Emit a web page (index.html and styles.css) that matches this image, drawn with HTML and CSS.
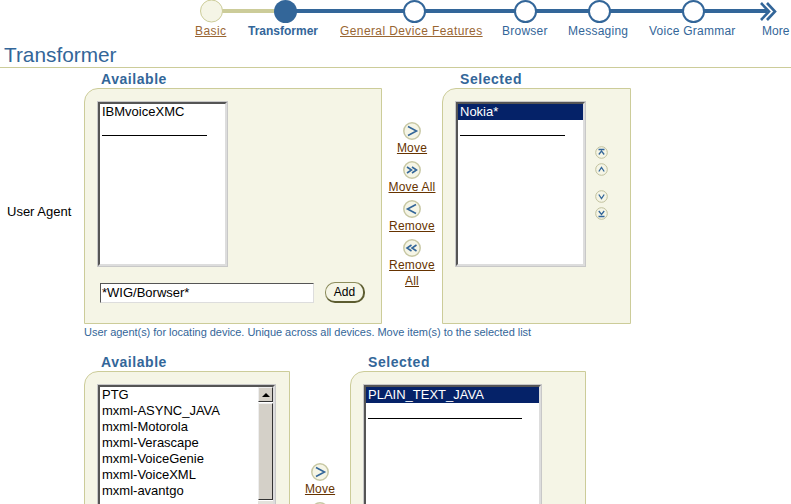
FILE: index.html
```html
<!DOCTYPE html>
<html lang="en">
<head>
<meta charset="utf-8">
<title>Transformer</title>
<link rel="stylesheet" href="styles.css">
</head>
<body>
<svg width="0" height="0" class="defs" aria-hidden="true">
  <symbol id="ring" viewBox="0 0 18 18"><circle cx="9" cy="9" r="8.2" fill="#f5f5e6" stroke="#c8c8a4" stroke-width="1.5"/></symbol>
</svg>
<nav class="train">
  <svg class="track" width="791" height="24" viewBox="0 0 791 24" aria-hidden="true">
    <rect x="222" y="9" width="54" height="4" fill="#cccc99"/>
    <rect x="285" y="9" width="482" height="4" fill="#336699"/>
    <circle cx="211.5" cy="11" r="11" fill="#f5f5e6" stroke="#cccc99" stroke-width="1"/>
    <circle cx="285.5" cy="11.5" r="11.5" fill="#336699"/>
    <circle cx="414.5" cy="11.5" r="10.5" fill="#fff" stroke="#336699" stroke-width="2"/>
    <circle cx="525.5" cy="11.5" r="10.5" fill="#fff" stroke="#336699" stroke-width="2"/>
    <circle cx="599.5" cy="11.5" r="10.5" fill="#fff" stroke="#336699" stroke-width="2"/>
    <circle cx="693.5" cy="11.5" r="10.5" fill="#fff" stroke="#336699" stroke-width="2"/>
    <path d="M761 3l8 8.500-8 8.500M767 3l8 8.500-8 8.500" fill="none" stroke="#336699" stroke-width="2.600"/>
  </svg>
  <div class="steps">
    <a class="step done">Basic</a>
    <span class="step current">Transformer</span>
    <a class="step done">General Device Features</a>
    <span class="step">Browser</span>
    <span class="step">Messaging</span>
    <span class="step">Voice Grammar</span>
    <span class="step more">More</span>
  </div>
</nav>
<h1 class="title">Transformer</h1>

<section class="field first">
  <div class="field-label">User Agent</div>
  <div class="field-body">
    <div class="shuttle">
      <div class="pane">
        <h2 class="pane-title indent-a">Available</h2>
        <div class="box box-a1">
          <div class="list list-a1">
            <div class="item">IBMvoiceXMC</div>
            <div class="sep sep-short"></div>
          </div>
          <div class="add-row">
            <div class="textbox">*WIG/Borwser*</div>
            <button class="add" type="button">Add</button>
          </div>
        </div>
      </div>
      <div class="moves">
        <div class="move"><svg class="ico" viewBox="0 0 18 18"><use href="#ring"/><path d="M5 4.500 13.500 9 5 13.500" fill="none" stroke="#336699" stroke-width="1.600"/></svg><a>Move</a></div>
        <div class="move"><svg class="ico" viewBox="0 0 18 18"><use href="#ring"/><path d="M4 6l4.500 3L4 12M9 6l4.500 3L9 12" fill="none" stroke="#336699" stroke-width="1.600"/></svg><a>Move All</a></div>
        <div class="move"><svg class="ico" viewBox="0 0 18 18"><use href="#ring"/><path d="M13 4.500 4.500 9l8.500 4.500" fill="none" stroke="#336699" stroke-width="1.600"/></svg><a>Remove</a></div>
        <div class="move"><svg class="ico" viewBox="0 0 18 18"><use href="#ring"/><path d="M8.500 6 4 9l4.500 3M13.500 6 9 9l4.500 3" fill="none" stroke="#336699" stroke-width="1.600"/></svg><a>Remove All</a></div>
      </div>
      <div class="pane">
        <h2 class="pane-title indent-s1">Selected</h2>
        <div class="box box-s1">
          <div class="list list-s1">
            <div class="item selected">Nokia*</div>
            <div class="sep sep-short"></div>
          </div>
          <div class="reorder">
            <div class="order-group">
              <svg class="mini" viewBox="0 0 13 13"><circle cx="6.500" cy="6.500" r="5.800" fill="#f5f5e6" stroke="#c0c09c"/><path d="M3.500 3.500h6M3.800 8.500l2.700-3.500 2.700 3.500" fill="none" stroke="#336699" stroke-width="1.300"/></svg>
              <svg class="mini" viewBox="0 0 13 13"><circle cx="6.500" cy="6.500" r="5.800" fill="#f5f5e6" stroke="#c0c09c"/><path d="M3.800 8.500l2.700-4 2.700 4" fill="none" stroke="#336699" stroke-width="1.300"/></svg>
            </div>
            <div class="order-group">
              <svg class="mini" viewBox="0 0 13 13"><circle cx="6.500" cy="6.500" r="5.800" fill="#f5f5e6" stroke="#c0c09c"/><path d="M3.800 4.500l2.700 4 2.700-4" fill="none" stroke="#336699" stroke-width="1.300"/></svg>
              <svg class="mini" viewBox="0 0 13 13"><circle cx="6.500" cy="6.500" r="5.800" fill="#f5f5e6" stroke="#c0c09c"/><path d="M3.500 9.500h6M3.800 4l2.700 3.500L9.200 4" fill="none" stroke="#336699" stroke-width="1.300"/></svg>
            </div>
          </div>
        </div>
      </div>
    </div>
    <p class="help">User agent(s) for locating device. Unique across all devices. Move item(s) to the selected list</p>
  </div>
</section>

<section class="field second">
  <div class="field-label"></div>
  <div class="field-body">
    <div class="shuttle">
      <div class="pane">
        <h2 class="pane-title indent-a">Available</h2>
        <div class="box box-a2">
          <div class="list list-a2">
            <div class="rows">
              <div class="item">PTG</div>
              <div class="item">mxml-ASYNC_JAVA</div>
              <div class="item">mxml-Motorola</div>
              <div class="item">mxml-Verascape</div>
              <div class="item">mxml-VoiceGenie</div>
              <div class="item">mxml-VoiceXML</div>
              <div class="item">mxml-avantgo</div>
            </div>
            <div class="scrollbar">
              <div class="scroll-btn"><span class="arrow"></span></div>
              <div class="scroll-thumb"></div>
              <div class="scroll-rest"></div>
            </div>
          </div>
        </div>
      </div>
      <div class="moves moves-2">
        <div class="move"><svg class="ico" viewBox="0 0 18 18"><use href="#ring"/><path d="M5 4.500 13.500 9 5 13.500" fill="none" stroke="#336699" stroke-width="1.600"/></svg><a>Move</a></div>
        <div class="move"><svg class="ico" viewBox="0 0 18 18"><use href="#ring"/><path d="M4 6l4.500 3L4 12M9 6l4.500 3L9 12" fill="none" stroke="#336699" stroke-width="1.600"/></svg></div>
      </div>
      <div class="pane">
        <h2 class="pane-title indent-s2">Selected</h2>
        <div class="box box-s2">
          <div class="list list-s2">
            <div class="item selected">PLAIN_TEXT_JAVA</div>
            <div class="sep sep-long"></div>
          </div>
        </div>
      </div>
    </div>
  </div>
</section>
</body>
</html>
```
FILE: styles.css
```css
* { box-sizing: border-box; }
html, body { margin: 0; padding: 0; height: 504px; overflow: hidden; background: #fff; }
body { font-family: "Liberation Sans", Arial, sans-serif; font-size: 12px; color: #000; }
.defs { position: absolute; }

.train { height: 40px; }
.track { display: block; }
.steps { display: grid; grid-template-columns: 33px 72px 142px 46px 61px 86px 26px; column-gap: 20px; padding-left: 195px; height: 16px; line-height: 15px; letter-spacing: 0.25px; color: #336699; }
.step { white-space: nowrap; }
.step.done { color: #996633; text-decoration: underline; letter-spacing: 0.4px; }
.step.current { font-weight: bold; letter-spacing: 0; }
.step.more { margin-left: 7px; letter-spacing: 0; }

.title { margin: 0; height: 28px; padding: 3px 0 0 4px; font-size: 20.800px; font-weight: normal; line-height: 23px; color: #336699; border-bottom: 1px solid #cccc99; }

.field { display: flex; }
.field-label { width: 84px; padding-left: 7px; align-self: flex-start; font-size: 13px; line-height: 14px; }
.first .field-label { margin-top: 134px; }
.first { height: 286px; padding-top: 3px; }
.shuttle { display: flex; align-items: flex-start; }
.pane-title { margin: 0; height: 17px; font-size: 14px; line-height: 16px; font-weight: bold; color: #336699; letter-spacing: 0.55px; }
.indent-a { padding-left: 17px; }
.indent-s1 { padding-left: 18px; }
.indent-s2 { padding-left: 18px; }

.box { background: #f5f5e6; border: 1px solid #cccc99; border-top-left-radius: 14px; }
.box-a1 { width: 298px; height: 236px; padding: 13px 0 0 13px; }
.box-s1 { width: 189px; height: 236px; padding: 13px 0 0 13px; display: flex; }
.box-a2 { width: 206px; height: 180px; padding: 13px 0 0 13px; }
.box-s2 { width: 236px; height: 180px; padding: 13px 0 0 13px; }

.list { background: #fff; border: 2px solid; border-color: #555 #ddd #ddd #555; outline: 1px solid #c8c8c8; font-size: 13px; }
.list-a1 { width: 129px; height: 164px; }
.list-s1 { width: 129px; height: 164px; flex: none; }
.list-a2 { width: 177px; height: 170px; display: flex; }
.list-s2 { width: 177px; height: 170px; }
.rows { flex: 1; }
.item { height: 16px; line-height: 16px; padding-left: 2px; white-space: nowrap; }
.item.selected { background: #052268; color: #fff; }
.sep { height: 1px; background: #000; margin: 15px 0 0 2px; }
.sep-short { width: 105px; }
.sep-long { width: 154px; }

.scrollbar { width: 15px; flex: none; display: flex; flex-direction: column; gap: 1px; }
.scroll-btn { height: 15px; background: #d4d0c8; border: 1px solid; border-color: #eee #333 #333 #eee; display: flex; align-items: center; justify-content: center; }
.arrow { width: 0; height: 0; border-left: 4px solid transparent; border-right: 4px solid transparent; border-bottom: 4px solid #000; }
.scroll-thumb { height: 97px; background: #d4d0c8; border: 1px solid; border-color: #eee #333 #333 #eee; }
.scroll-rest { flex: 1; background: #e4e2dc; }

.add-row { display: flex; align-items: center; gap: 11px; margin-top: 16px; padding-left: 2px; }
.textbox { width: 214px; height: 20px; background: #fff; border: 1px solid; border-color: #555 #ddd #ddd #555; font-size: 13px; line-height: 18px; padding-left: 1px; }
.add { width: 40px; height: 21px; padding: 0; font: 12px "Liberation Sans", Arial, sans-serif; color: #000; background: #f5f5e6; border: 1px solid #8c8c5c; border-bottom: 2px solid #5c5c30; border-right: 2px solid #5c5c30; border-radius: 10px; }

.moves { width: 60px; margin-top: 51px; display: flex; flex-direction: column; align-items: center; }
.move { display: flex; flex-direction: column; align-items: center; width: 52px; margin-bottom: 5px; text-align: center; line-height: 16px; letter-spacing: 0.2px; }
.ico { width: 18px; height: 18px; display: block; flex: none; }
.move a { color: #663300; text-decoration: underline; }
.moves-2 { margin-top: 109px; }

.reorder { margin-left: 10px; padding-top: 44px; display: flex; flex-direction: column; gap: 14px; }
.order-group { display: flex; flex-direction: column; gap: 4px; }
.mini { width: 13px; height: 13px; display: block; }

.help { margin: 1px 0 0; font-size: 11px; line-height: 14px; color: #336699; white-space: nowrap; letter-spacing: -0.03px; }
```
